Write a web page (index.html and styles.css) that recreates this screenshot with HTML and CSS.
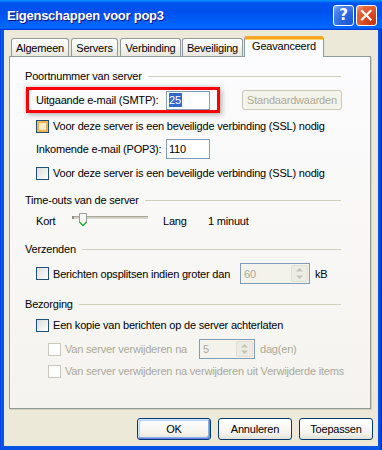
FILE: index.html
```html
<!DOCTYPE html>
<html>
<head>
<meta charset="utf-8">
<link rel="stylesheet" href="styles.css">
</head>
<body>
<div class="window">
  <div class="titlebar">
    <span class="title">Eigenschappen voor pop3</span>
    <div class="tb-buttons">
      <div class="tb-btn help">?</div>
      <div class="tb-btn close">
        <svg width="21" height="21" viewBox="0 0 21 21"><path d="M6 6 L14.5 14.5 M14.5 6 L6 14.5" stroke="#fff" stroke-width="2.2" stroke-linecap="square"/></svg>
      </div>
    </div>
  </div>
  <div class="client">
    <div class="tabs">
      <div class="tab t1">Algemeen</div>
      <div class="tab t2">Servers</div>
      <div class="tab t3">Verbinding</div>
      <div class="tab t4">Beveiliging</div>
      <div class="tab active">Geavanceerd</div>
    </div>
    <div class="panel">
      <div class="group-h first"><span>Poortnummer van server</span><i class="rule"></i></div>
      <div class="row-smtp">
        <div class="redbox">
          <span class="lbl">Uitgaande e-mail (SMTP):</span>
          <div class="field"><span class="sel">25</span></div>
        </div>
        <div class="btn disabled-btn">Standaardwaarden</div>
      </div>
      <div class="chk-row r-check1"><span class="cb hover"></span><span>Voor deze server is een beveiligde verbinding (SSL) nodig</span></div>
      <div class="field-row r-pop3"><span class="lbl">Inkomende e-mail (POP3):</span><div class="field">110</div></div>
      <div class="chk-row r-check2"><span class="cb"></span><span>Voor deze server is een beveiligde verbinding (SSL) nodig</span></div>

      <div class="group-h"><span>Time-outs van de server</span><i class="rule"></i></div>
      <div class="slider-row">
        <span class="s-kort">Kort</span>
        <div class="slider">
          <i class="track"></i>
          <i class="tick"></i>
          <svg class="thumb" width="8" height="14" viewBox="0 0 8 14"><polygon points="0.5,0.5 7.5,0.5 7.5,9.5 4,13 0.5,9.5" fill="#F6F6F2" stroke="#9A9C98"/><polyline points="0.5,9 4,12.5 7.5,9" fill="none" stroke="#2BAE3A" stroke-width="1.3"/><line x1="1.5" y1="1.5" x2="6.5" y2="1.5" stroke="#fff"/></svg>
        </div>
        <span class="s-lang">Lang</span>
        <span>1 minuut</span>
      </div>

      <div class="group-h"><span>Verzenden</span><i class="rule"></i></div>
      <div class="chk-row r-split"><span class="cb"></span><span class="lbl-split">Berichten opsplitsen indien groter dan</span>
        <div class="spin w70"><span class="spin-val">60</span>
          <div class="spin-btns">
            <div class="sb"><svg width="9" height="5" viewBox="0 0 9 5"><polygon points="1,4.5 4.5,1 8,4.5" fill="#C4C3B8"/></svg></div>
            <div class="sb"><svg width="9" height="5" viewBox="0 0 9 5"><polygon points="1,0.5 4.5,4 8,0.5" fill="#C4C3B8"/></svg></div>
          </div>
        </div>
        <span class="unit">kB</span>
      </div>

      <div class="group-h"><span>Bezorging</span><i class="rule"></i></div>
      <div class="chk-row r-kopie"><span class="cb"></span><span>Een kopie van berichten op de server achterlaten</span></div>
      <div class="chk-row sub r-days"><span class="cb dis"></span><span class="lbl-days gray">Van server verwijderen na</span>
        <div class="spin w56"><span class="spin-val">5</span>
          <div class="spin-btns">
            <div class="sb"><svg width="9" height="5" viewBox="0 0 9 5"><polygon points="1,4.5 4.5,1 8,4.5" fill="#C4C3B8"/></svg></div>
            <div class="sb"><svg width="9" height="5" viewBox="0 0 9 5"><polygon points="1,0.5 4.5,4 8,0.5" fill="#C4C3B8"/></svg></div>
          </div>
        </div>
        <span class="unit gray">dag(en)</span>
      </div>
      <div class="chk-row sub r-last"><span class="cb dis"></span><span class="gray">Van server verwijderen na verwijderen uit Verwijderde items</span></div>
    </div>
    <div class="footer">
      <div class="btn pbtn default">OK</div>
      <div class="btn pbtn">Annuleren</div>
      <div class="btn pbtn">Toepassen</div>
    </div>
  </div>
</div>
</body>
</html>
```

FILE: styles.css
```css
html, body {
  margin: 0;
  padding: 0;
  background: #0654E6;
}
body {
  width: 382px;
  height: 450px;
  overflow: hidden;
  font-family: "Liberation Sans", Arial, sans-serif;
  font-size: 11px;
  letter-spacing: -0.2px;
  color: #000;
}
.window {
  width: 382px;
  height: 450px;
  display: flex;
  flex-direction: column;
  background: linear-gradient(90deg, #0831D9 0, #0A5AEE 1px, #0654E6 3px, #0654E6 calc(100% - 3px), #0040D0 calc(100% - 1px), #001EA0 100%);
}
.titlebar {
  height: 30px;
  flex: none;
  display: flex;
  align-items: center;
  justify-content: space-between;
  padding: 0 5px 0 7px;
  background: linear-gradient(180deg, #0997FF 0%, #0053EE 10%, #0050EE 40%, #0066FF 86%, #0066FF 92%, #005BFF 95%, #003DD7 97%, #003DD7 100%);
}
.title {
  color: #fff;
  font-weight: bold;
  font-size: 13px;
  letter-spacing: -0.25px;
  text-shadow: 1px 1px #0F1089;
  margin-top: 1px;
}
.tb-buttons {
  display: flex;
  gap: 2px;
}
.tb-btn {
  width: 21px;
  height: 21px;
  box-sizing: border-box;
  border: 1px solid #fff;
  border-radius: 3px;
  display: flex;
  align-items: center;
  justify-content: center;
}
.help {
  background: radial-gradient(circle at 85% 85%, #1E5AD6 0%, #2A65DE 40%, #4B82EE 75%, #8FB0F5 100%);
  color: #fff;
  font-family: "DejaVu Sans", sans-serif;
  font-weight: bold;
  font-size: 15px;
  letter-spacing: 0;
}
.close {
  background: radial-gradient(circle at 85% 85%, #C43A12 0%, #D84A22 40%, #E5683F 75%, #F2A88C 100%);
}
.close svg { display: block; margin: -1px; }
.client {
  flex: 1;
  margin: 0 4px 4px 4px;
  background: #ECE9D8;
  display: flex;
  flex-direction: column;
}
.tabs {
  display: flex;
  align-items: flex-end;
  height: 20px;
  margin: 6px 0 0 7px;
  position: relative;
  z-index: 2;
}
.tab {
  height: 18px;
  box-sizing: border-box;
  border: 1px solid #919B9C;
  border-bottom: none;
  border-radius: 3px 3px 0 0;
  background: linear-gradient(#FFFFFF, #F3F2EC 60%, #E7E6DF);
  display: flex;
  align-items: center;
  justify-content: center;
  padding-top: 1px;
}
.t1 { width: 58px; margin-right: 2px; }
.t2 { width: 47px; margin-right: 2px; }
.t3 { width: 61px; margin-right: 1px; }
.t4 { width: 61px; margin-right: 1px; }
.tab.active {
  width: 80px;
  height: 21px;
  margin-bottom: -1px;
  background: #FCFCFE;
  border-top: 3px solid #F5A623;
  box-shadow: inset 0 1px 0 #FFD56A;
  align-items: flex-start;
  padding-top: 1px;
}
.panel {
  margin: 0 7px 0 5px;
  height: 353px;
  box-sizing: border-box;
  border: 1px solid #919B9C;
  background: linear-gradient(#FCFCFE, #F4F3EE);
  box-shadow: 1px 1px 0 #D0CEBF;
  display: flex;
  flex-direction: column;
}
.group-h {
  height: 14px;
  display: flex;
  align-items: center;
  margin: 13px 29px 0 15px;
}
.group-h.first { margin-top: 12px; }
.rule {
  flex: 1;
  height: 1px;
  background: #D0D0BF;
  margin-left: 6px;
}
.row-smtp {
  display: flex;
  align-items: center;
  height: 26px;
  margin: 4px 0 0 16px;
}
.redbox {
  width: 194px;
  height: 26px;
  box-sizing: border-box;
  border: 3px solid #FF0000;
  padding-left: 7px;
  display: flex;
  align-items: center;
  box-shadow: 2px 2px 5px rgba(0, 0, 0, 0.28), -1px -1px 3px rgba(0, 0, 0, 0.12);
}
.lbl {
  width: 130px;
  flex: none;
}
.field {
  width: 44px;
  height: 20px;
  box-sizing: border-box;
  border: 1px solid #7F9DB9;
  background: #fff;
  padding-left: 2px;
  display: flex;
  align-items: center;
}
.row-smtp .field { height: 19px; }
.sel {
  background: #316AC5;
  color: #fff;
  padding: 1px 1px 1px 0;
}
.btn {
  box-sizing: border-box;
  border: 1px solid #003C74;
  border-radius: 3px;
  background: linear-gradient(#FFFFFF, #F4F3EE 70%, #E3E1D6);
  display: flex;
  align-items: center;
  justify-content: center;
}
.disabled-btn {
  width: 100px;
  height: 20px;
  margin-left: 22px;
  border-color: #C9C7BA;
  background: #F5F4EA;
  color: #ACA899;
}
.chk-row {
  height: 14px;
  display: flex;
  align-items: center;
  margin-left: 26px;
}
.chk-row.sub { margin-left: 38px; }
.cb {
  width: 13px;
  height: 13px;
  box-sizing: border-box;
  border: 1px solid #1C5180;
  background: linear-gradient(135deg, #DCDCD7, #FFFFFF);
  margin-right: 4px;
  flex: none;
}
.cb.hover {
  background: #FCEBC4;
  box-shadow: inset 0 0 0 2px #F6B24A;
}
.cb.dis {
  border-color: #CAC8BB;
  background: #fff;
}
.gray { color: #ACA899; }
.r-check1 { margin-top: 6px; }
.field-row {
  height: 20px;
  display: flex;
  align-items: center;
  margin: 6px 0 0 26px;
}
.r-check2 { margin-top: 7px; }
.slider-row {
  height: 16px;
  display: flex;
  align-items: center;
  margin: 6px 0 0 26px;
}
.s-kort { width: 36px; }
.slider {
  width: 76px;
  height: 16px;
  position: relative;
}
.track {
  position: absolute;
  left: 0;
  right: 0;
  top: 3px;
  height: 2px;
  background: #D6D4C8;
  border-top: 1px solid #A8A699;
  border-bottom: 1px solid #fff;
}
.tick {
  position: absolute;
  left: 0;
  top: 3px;
  width: 2px;
  height: 3px;
  background: #8F8D85;
}
.thumb {
  position: absolute;
  left: 7px;
  top: 0;
}
.s-lang {
  width: 45px;
  margin-left: 15px;
}
.r-split {
  height: 21px;
  margin-top: 7px;
}
.lbl-split { width: 187px; flex: none; }
.spin {
  height: 21px;
  box-sizing: border-box;
  border: 1px solid #7F9DB9;
  background: #F3F2EB;
  display: flex;
  align-items: center;
  justify-content: space-between;
  padding: 1px 1px 1px 3px;
  color: #ACA899;
}
.w70 { width: 70px; }
.w56 { width: 56px; height: 20px; }
.spin-btns {
  width: 15px;
  align-self: stretch;
  display: flex;
  flex-direction: column;
  border: 1px solid #E2E0D6;
  border-radius: 2px;
  background: #EDECE3;
}
.sb {
  flex: 1;
  display: flex;
  align-items: center;
  justify-content: center;
}
.unit { margin-left: 5px; }
.r-kopie { margin-top: 7px; }
.r-days {
  height: 20px;
  margin-top: 7px;
}
.lbl-days { width: 134px; flex: none; }
.r-last { margin-top: 5px; }
.footer {
  display: flex;
  justify-content: flex-end;
  gap: 7px;
  margin: 9px 5px 0 0;
}
.pbtn {
  width: 74px;
  height: 22px;
}
.pbtn.default {
  box-shadow: inset -1px -1px #6982EE, inset 1px 1px #CEE7FF, inset -2px -2px #89ADE4, inset 2px 2px #BCD4F6;
}
```
